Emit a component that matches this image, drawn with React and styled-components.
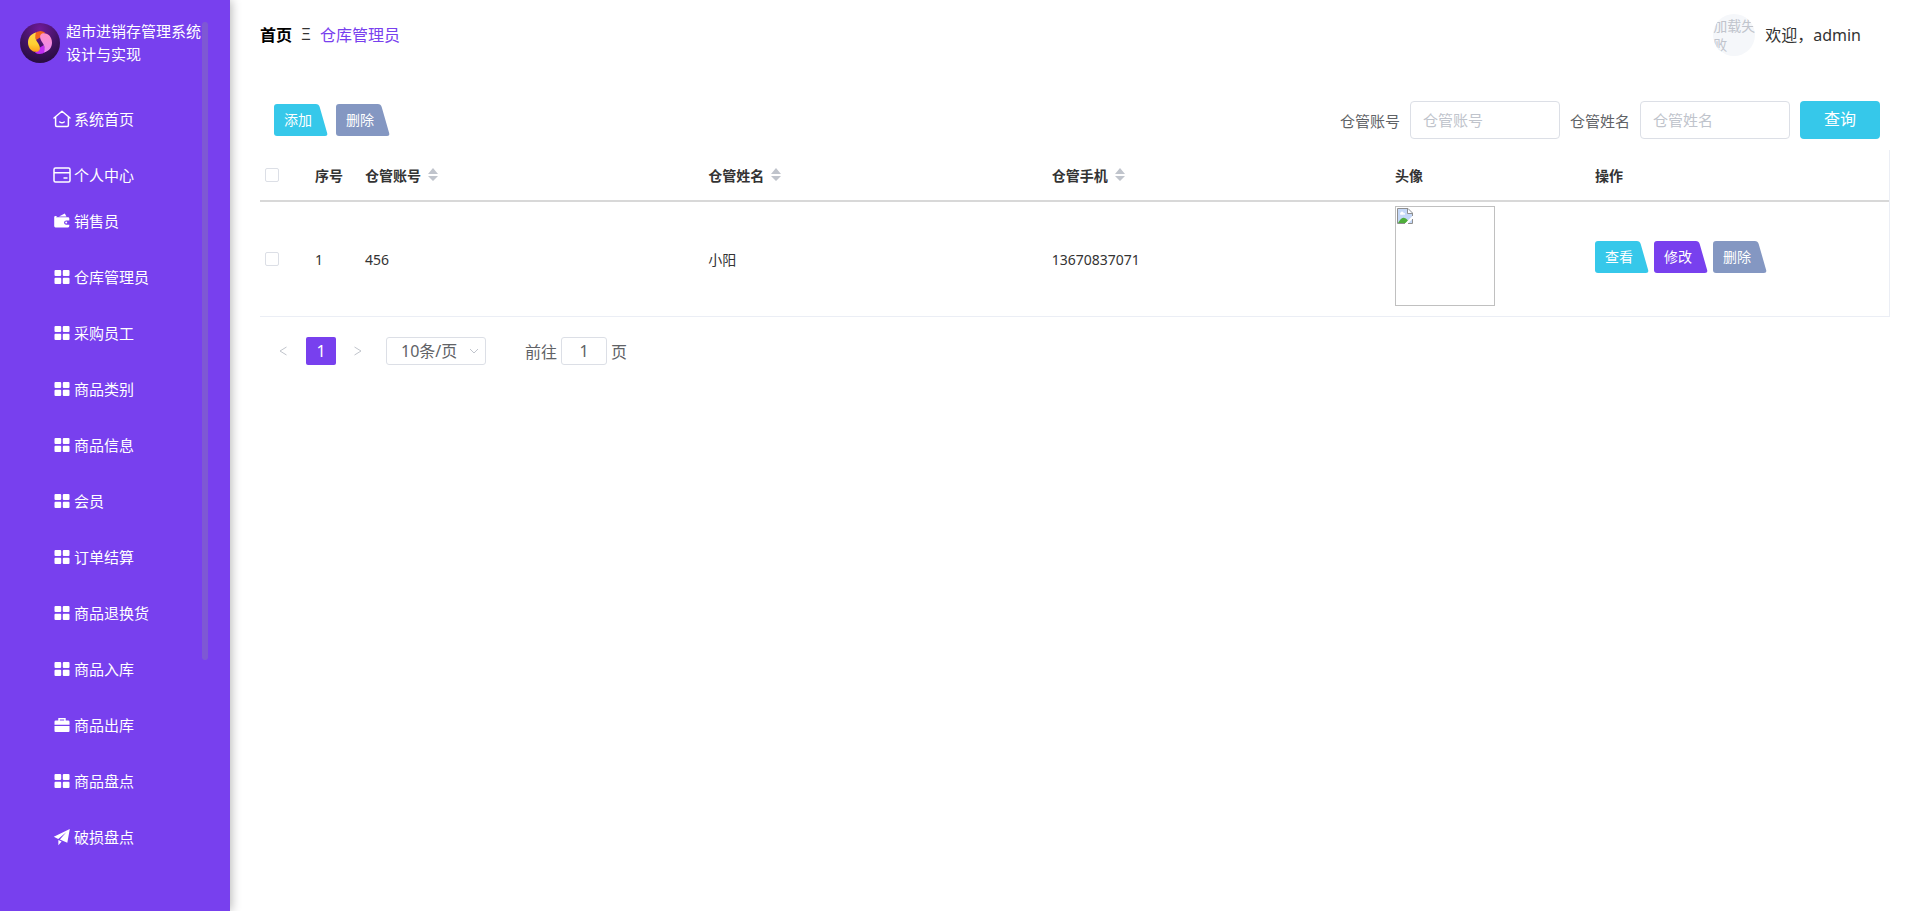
import React, { useState } from 'react'
import styled, { createGlobalStyle } from 'styled-components'

const GlobalStyle = createGlobalStyle`
    * {
        box-sizing: border-box;
    }

    body {
        margin: 0;
        background: #fff;
        color: #333;
        font-family: 'Noto Sans', 'Noto Sans CJK SC', sans-serif;
        font-size: 14px;
    }

    button, input, select {
        font-family: inherit;
    }
`;

const Page = styled.div`
    display: flex;
    min-height: 100vh;
`;

/* sidebar */

const Sidebar = styled.aside`
    position: relative;
    flex: 0 0 230px;
    padding: 20px 22px 20px 20px;
    background: #7840ee;
    color: #fff;
    box-shadow: 1px 0 10px rgba(0, 0, 0, .3);
`;

const ScrollThumb = styled.div`
    position: absolute;
    top: 22px;
    right: 22px;
    width: 6px;
    height: 70vh;
    border-radius: 3px;
    background: rgba(144, 147, 153, .3);
`;

const Brand = styled.div`
    display: flex;
    gap: 6px;
    margin-bottom: 30px;
`;

const BrandLogo = styled.svg`
    flex: none;
    width: 40px;
    height: 40px;
    margin-top: 3px;
`;

const BrandName = styled.div`
    width: 136px;
    font-size: 15px;
    line-height: 23px;
`;

const Menu = styled.ul`
    margin: 0;
    padding: 0;
    list-style: none;
`;

const MenuItem = styled.li`
    margin-bottom: ${({$tight}) => ($tight ? '0' : '10px')};
`;

const MenuLink = styled.a`
    display: flex;
    align-items: center;
    gap: 3px;
    height: 46px;
    padding-left: 33px;
    color: #fff;
    font-size: 15px;
    text-decoration: none;

    svg {
        width: 18px;
        height: 18px;
    }
`;

const MenuText = styled.span`
    padding-bottom: 2px;
`;

/* header */

const Main = styled.main`
    flex: 1;
    min-width: 0;
    padding: 0 30px;
`;

const Header = styled.header`
    display: flex;
    align-items: center;
    justify-content: space-between;
    height: 70px;
    padding-right: 29px;
    font-size: 16px;
`;

const Breadcrumb = styled.nav`
    display: flex;
    align-items: center;
    gap: 9px;
    padding-bottom: 2px;
`;

const HomeLink = styled.a`
    color: #000;
    font-weight: 700;
    text-decoration: none;
`;

const Current = styled.span`
    color: #7840ee;
`;

const User = styled.div`
    display: flex;
    align-items: center;
    gap: 10px;
`;

const Welcome = styled.span`
    padding-bottom: 2px;
`;

const Avatar = styled.div`
    width: 42px;
    height: 42px;
    overflow: hidden;
    border-radius: 50%;
    background: #f5f7fa;
    color: #c0c4cc;
    font-size: 14px;
    line-height: 19px;
    padding-top: 2px;
`;

/* toolbar */

const Toolbar = styled.div`
    display: flex;
    align-items: center;
    justify-content: space-between;
    margin: 31px 10px 11px 14px;
`;

const Actions = styled.div`
    display: flex;
    gap: ${({$gap}) => $gap};
    margin-bottom: ${({$raised}) => ($raised ? '5px' : '0')};
`;

const TabButton = styled.button`
    position: relative;
    z-index: 0;
    width: 54px;
    height: 32px;
    padding: 0 16px 2px 10px;
    border: none;
    background: none;
    color: #fff;
    font-size: 14px;
    white-space: nowrap;
    cursor: pointer;

    &::before,
    &::after {
        content: '';
        position: absolute;
        z-index: -1;
        top: 0;
        bottom: 0;
        border-radius: 3px;
        background: ${({$tone}) => $tone};
    }

    &::before {
        left: 0;
        right: 12px;
    }

    &::after {
        left: 12px;
        right: 0;
        transform: skewX(16deg);
        transform-origin: bottom;
    }
`;

const Search = styled.form`
    display: flex;
    align-items: center;
    gap: 10px;
`;

const SearchLabel = styled.label`
    display: flex;
    align-items: center;
    gap: 10px;
    color: #606266;
    font-size: 15px;
`;

const SearchInput = styled.input`
    width: 150px;
    height: 38px;
    padding: 0 12px;
    border: 1px solid #dcdfe6;
    border-radius: 4px;
    color: #606266;
    font-size: 15px;
    outline: none;

    &::placeholder {
        color: #c0c4cc;
    }
`;

const SearchButton = styled.button`
    width: 80px;
    height: 38px;
    padding: 0 0 4px;
    border: none;
    border-radius: 4px;
    background: #36c8ea;
    color: #fff;
    font-size: 16px;
    cursor: pointer;
`;

/* table */

const Table = styled.table`
    width: 100%;
    table-layout: fixed;
    border-collapse: separate;
    border-spacing: 0;
    border-right: 1px solid #ebeef5;
`;

const Col = styled.col`
    width: ${({$w}) => $w};
`;

const Th = styled.th`
    height: 52px;
    padding: 0 5px;
    border-bottom: 2px solid #d8d8d8;
    color: #333;
    font-size: 14px;
    font-weight: 700;
    text-align: left;
`;

const Td = styled.td`
    height: 115px;
    padding: 0 5px;
    border-bottom: 1px solid #ebeef5;
    font-size: 14px;
`;

const HeadCell = styled.div`
    display: flex;
    align-items: center;
    gap: 7px;
`;

const Check = styled.input`
    display: block;
    width: 14px;
    height: 14px;
    margin: 0;
    appearance: none;
    border: 1px solid #dcdfe6;
    border-radius: 2px;
    background: #fff;

    &:checked {
        border-color: #7840ee;
        background: #7840ee;
    }
`;

const SortButton = styled.button`
    display: flex;
    padding: 0;
    border: none;
    background: none;
    cursor: pointer;
`;

const Photo = styled.div`
    width: 100px;
    height: 100px;
    margin-bottom: 6px;
    padding: 1px;
    border: 1px solid #c0c0c0;
`;

/* pagination */

const Pagination = styled.div`
    display: flex;
    align-items: center;
    margin-top: 20px;
    padding-left: 8px;
    color: #606266;
    font-size: 16px;
`;

const PageArrow = styled.button`
    display: flex;
    align-items: center;
    justify-content: center;
    width: 30px;
    height: 28px;
    padding: 0;
    border: none;
    background: none;
    color: #c0c4cc;
`;

const PageNumber = styled.button`
    width: 30px;
    height: 28px;
    margin: 0 7px 0 8px;
    padding: 0;
    border: none;
    border-radius: 2px;
    background: #7840ee;
    color: #fff;
    font-size: 16px;
`;

const SizeBox = styled.div`
    position: relative;
    margin: 0 39px 0 13px;

    svg {
        position: absolute;
        top: 9px;
        right: 7px;
        pointer-events: none;
    }
`;

const SizeSelect = styled.select`
    display: block;
    width: 100px;
    height: 28px;
    padding: 0 24px 0 14px;
    appearance: none;
    border: 1px solid #dcdfe6;
    border-radius: 3px;
    background: #fff;
    color: #606266;
    font-size: 16px;
`;

const Jump = styled.label`
    display: flex;
    align-items: center;
    gap: 4px;
`;

const JumpInput = styled.input`
    width: 46px;
    height: 28px;
    padding: 0;
    border: 1px solid #dcdfe6;
    border-radius: 3px;
    color: #606266;
    font-size: 16px;
    text-align: center;
`;

const HomeIcon = () => (
    <svg viewBox="0 0 18 18" fill="none" stroke="#fff" strokeWidth="1.5" strokeLinejoin="round" strokeLinecap="round">
        <path d="M1 8 9 1.2 17 8M2.600 7v8.300q0 1.200 1.200 1.200h10.400q1.200 0 1.200-1.200V7M6.800 12q2.200 1.600 4.400 0" />
    </svg>
)

const CardIcon = () => (
    <svg viewBox="0 0 18 18" fill="none" stroke="#fff" strokeWidth="1.5">
        <rect x="1" y="2" width="16" height="14" rx="1.5" />
        <path d="M1 6.700h16M10.500 12h4" />
    </svg>
)

const WalletIcon = () => (
    <svg viewBox="0 0 18 18" fill="#fff">
        <path d="M6 4.500 11.800 1.500l1.700 3z" />
        <path d="M2.500 4H4l-1 1.200h12q1.300 0 1.300 1.200v2H13q-2 .2-2 2.200t2 2.200h3.300V14q0 1.400-1.300 1.400H2.500Q1.200 15.400 1.200 14V5.300Q1.200 4 2.500 4z" />
        <circle cx="13.2" cy="10.6" r="1" />
    </svg>
)

const GridIcon = () => (
    <svg viewBox="0 0 18 18" fill="#fff">
        <rect x="1.5" y="2" width="6.7" height="6" rx="1" />
        <rect x="9.8" y="2" width="6.7" height="6" rx="1" />
        <rect x="1.5" y="9.8" width="6.7" height="6.2" rx="1" />
        <rect x="9.8" y="9.8" width="6.7" height="6.2" rx="1" />
    </svg>
)

const CaseIcon = () => (
    <svg viewBox="0 0 18 18" fill="#fff">
        <path d="M5.300 4.500V2h7.400v2.500h2.500q1.300 0 1.300 1.300v3h-15v-3q0-1.300 1.300-1.300zm1.500 0h4.400v-1H6.800z" fillRule="evenodd" />
        <path d="M1.500 10h15v5q0 1-1 1h-13q-1 0-1-1z" />
    </svg>
)

const PlaneIcon = () => (
    <svg viewBox="0 0 18 18" fill="#fff">
        <path d="M16.800 1 .8 8.800l4.400 2.200L13.500 4l-6.600 7.600 7.400 3.200z" />
        <path d="M5.400 12v5.200l3.200-3.800z" />
    </svg>
)

const SortIcon = () => (
    <svg width="10" height="14" viewBox="0 0 10 14" fill="#c0c4cc">
        <path d="M5 0 10 6H0zM0 8h10L5 13z" />
    </svg>
)

const BrokenImage = () => (
    <svg width="16" height="16" viewBox="0 0 16 16" role="img" aria-label="头像">
        <path d="M1 1h10l4 4v10H1z" fill="#c5d8f7" />
        <circle cx="5" cy="5" r="1.6" fill="#fff" />
        <path d="M3 5.200h5v1.400H3z" fill="#fff" />
        <path d="M1 15q5-9 10-2.500l-2 2.500z" fill="#4eae3a" />
        <path d="M15.500 8 8 15.500h3L15.500 11z" fill="#fff" />
        <path d="M.5 15.500V.5h10.500l4.500 4.500v3M.5 15.500H8M11 15.500h4.500V11" fill="none" stroke="#8f8f8f" />
        <path d="M10.500 1v4.500H15" fill="#fff" stroke="#8f8f8f" />
    </svg>
)

const Logo = () => (
    <BrandLogo viewBox="0 0 40 40" aria-hidden="true">
        <defs>
            <radialGradient id="disc" cx=".5" cy=".15" r=".85">
                <stop offset="0" stopColor="#701a98" />
                <stop offset=".6" stopColor="#3f1260" />
                <stop offset="1" stopColor="#280c40" />
            </radialGradient>
            <linearGradient id="gold" x1="0" y1="0" x2="0" y2="1">
                <stop offset="0" stopColor="#ffd84a" />
                <stop offset=".6" stopColor="#ffcf33" />
                <stop offset="1" stopColor="#ff9d1c" />
            </linearGradient>
            <linearGradient id="pink" x1="0" y1="0" x2="0" y2="1">
                <stop offset="0" stopColor="#ff8fc4" />
                <stop offset="1" stopColor="#e988f5" />
            </linearGradient>
        </defs>
        <circle cx="20" cy="20" r="20" fill="url(#disc)" />
        <path d="M14 10.500Q20 6 25 9.500L21 14l-5 3z" fill="#f0641e" />
        <path d="M26 28.500Q20 33 15 29.500l4-4.500 5-3z" fill="#c02df2" />
        <path d="M16 9.500C10 11 8 15.500 8 19.500 8 26 13 30 18 28.500 21 27 20 23 18 20 15.500 16.500 14.500 13.500 16 9.500z" fill="url(#gold)" />
        <path d="M24 29.500C30 28 32 23.500 32 19.500 32 13 27 9 22 10.500 19 12 20 16 22 19 24.500 22.500 25.500 25.500 24 29.500z" fill="url(#pink)" />
    </BrandLogo>
)

const menuData = [
    { title: '系统首页', icon: HomeIcon },
    { title: '个人中心', icon: CardIcon, tight: true },
    { title: '销售员', icon: WalletIcon },
    { title: '仓库管理员', icon: GridIcon },
    { title: '采购员工', icon: GridIcon },
    { title: '商品类别', icon: GridIcon },
    { title: '商品信息', icon: GridIcon },
    { title: '会员', icon: GridIcon },
    { title: '订单结算', icon: GridIcon },
    { title: '商品退换货', icon: GridIcon },
    { title: '商品入库', icon: GridIcon },
    { title: '商品出库', icon: CaseIcon },
    { title: '商品盘点', icon: GridIcon },
    { title: '破损盘点', icon: PlaneIcon },
]

const rows = [
    { id: 1, account: '456', name: '小阳', phone: '13670837071' },
]

const SortableHead = ({title}) => (
    <Th>
        <HeadCell>
            {title}
            <SortButton type="button" aria-label={`${title}排序`}><SortIcon /></SortButton>
        </HeadCell>
    </Th>
)

const App = () => {
    const [account, setAccount] = useState('')
    const [name, setName] = useState('')

    return (
        <Page>
            <GlobalStyle />
            <Sidebar>
                <Brand>
                    <Logo />
                    <BrandName>超市进销存管理系统设计与实现</BrandName>
                </Brand>
                <Menu>
                    {menuData.map(({title, icon: Icon, tight}) => (
                        <MenuItem key={title} $tight={tight}>
                            <MenuLink href="#"><Icon /><MenuText>{title}</MenuText></MenuLink>
                        </MenuItem>
                    ))}
                </Menu>
                <ScrollThumb />
            </Sidebar>

            <Main>
                <Header>
                    <Breadcrumb>
                        <HomeLink href="#">首页</HomeLink>
                        <span>Ξ</span>
                        <Current>仓库管理员</Current>
                    </Breadcrumb>
                    <User>
                        <Avatar>加载失败</Avatar>
                        <Welcome>欢迎，admin</Welcome>
                    </User>
                </Header>

                <Toolbar>
                    <Actions $gap="8px">
                        <TabButton $tone="#36c8ea">添加</TabButton>
                        <TabButton $tone="#8497c2">删除</TabButton>
                    </Actions>
                    <Search onSubmit={(e) => e.preventDefault()}>
                        <SearchLabel>
                            仓管账号
                            <SearchInput placeholder="仓管账号" value={account} onChange={(e) => setAccount(e.target.value)} />
                        </SearchLabel>
                        <SearchLabel>
                            仓管姓名
                            <SearchInput placeholder="仓管姓名" value={name} onChange={(e) => setName(e.target.value)} />
                        </SearchLabel>
                        <SearchButton>查询</SearchButton>
                    </Search>
                </Toolbar>

                <Table>
                    <colgroup>
                        <Col $w="50px" />
                        <Col $w="50px" />
                        <Col />
                        <Col />
                        <Col />
                        <Col $w="200px" />
                        <Col $w="299px" />
                    </colgroup>
                    <thead>
                        <tr>
                            <Th><Check type="checkbox" aria-label="全选" /></Th>
                            <Th>序号</Th>
                            <SortableHead title="仓管账号" />
                            <SortableHead title="仓管姓名" />
                            <SortableHead title="仓管手机" />
                            <Th>头像</Th>
                            <Th>操作</Th>
                        </tr>
                    </thead>
                    <tbody>
                        {rows.map((row) => (
                            <tr key={row.id}>
                                <Td><Check type="checkbox" aria-label={`选择${row.name}`} /></Td>
                                <Td>{row.id}</Td>
                                <Td>{row.account}</Td>
                                <Td>{row.name}</Td>
                                <Td>{row.phone}</Td>
                                <Td><Photo><BrokenImage /></Photo></Td>
                                <Td>
                                    <Actions $gap="5px" $raised>
                                        <TabButton $tone="#36c8ea">查看</TabButton>
                                        <TabButton $tone="#7840ee">修改</TabButton>
                                        <TabButton $tone="#8497c2">删除</TabButton>
                                    </Actions>
                                </Td>
                            </tr>
                        ))}
                    </tbody>
                </Table>

                <Pagination>
                    <PageArrow aria-label="上一页" disabled>
                        <svg width="8" height="10" viewBox="0 0 8 10" fill="none" stroke="currentColor"><path d="M7.500 1 1 5l6.500 4" /></svg>
                    </PageArrow>
                    <PageNumber>1</PageNumber>
                    <PageArrow aria-label="下一页" disabled>
                        <svg width="8" height="10" viewBox="0 0 8 10" fill="none" stroke="currentColor"><path d="M.5 1 7 5 .5 9" /></svg>
                    </PageArrow>
                    <SizeBox>
                        <SizeSelect aria-label="每页条数" defaultValue="10">
                            <option value="10">10条/页</option>
                            <option value="20">20条/页</option>
                            <option value="50">50条/页</option>
                        </SizeSelect>
                        <svg width="10" height="10" viewBox="0 0 10 10" fill="none" stroke="#c0c4cc"><path d="m1 3 4 4 4-4" /></svg>
                    </SizeBox>
                    <Jump>
                        前往
                        <JumpInput defaultValue="1" />
                        页
                    </Jump>
                </Pagination>
            </Main>
        </Page>
    )
}

export default App
